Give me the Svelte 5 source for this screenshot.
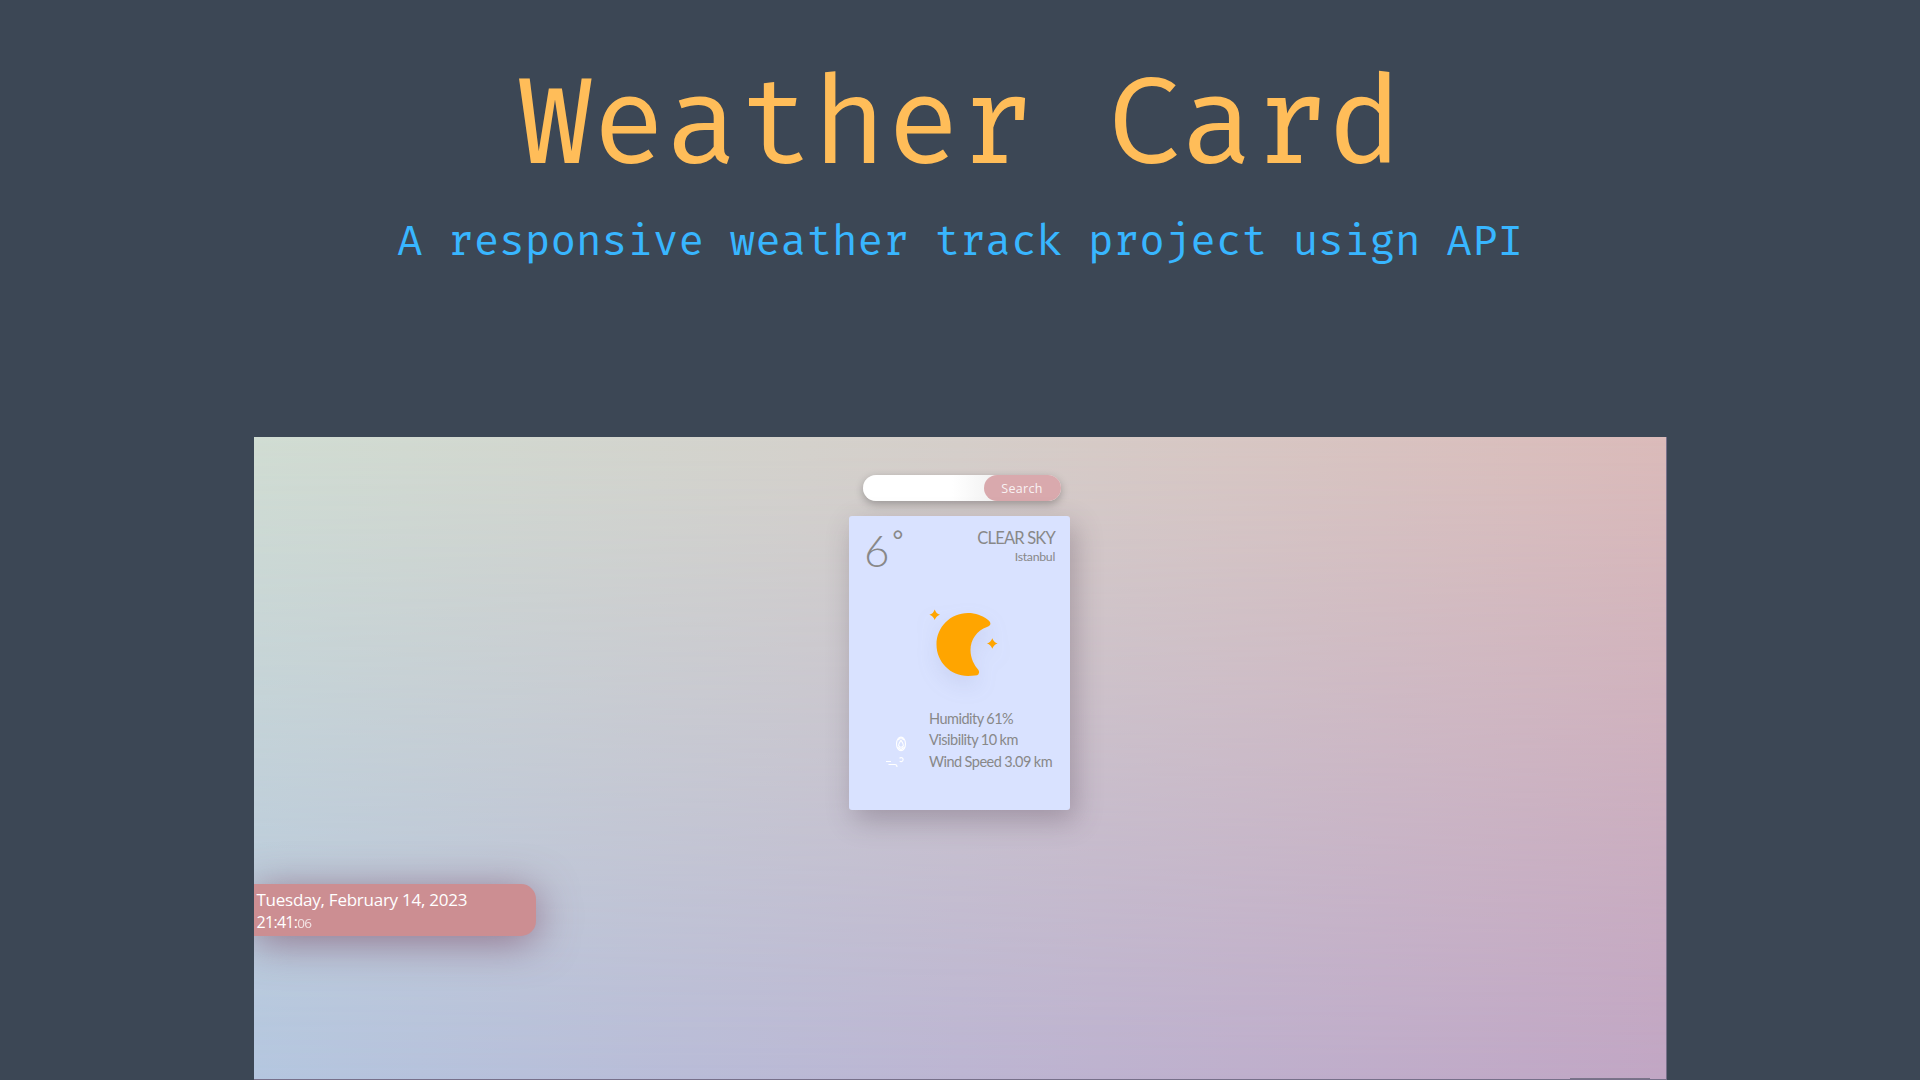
<script>
  const stats = ['Humidity 61%', 'Visibility 10 km', 'Wind Speed 3.09 km'];
</script>

<main>
  <h1>Weather Card</h1>
  <h2>A responsive weather track project usign API</h2>

  <section class="preview">
    <form class="search" onsubmit={(e) => e.preventDefault()}>
      <input aria-label="City" />
      <button>Search</button>
    </form>

    <article class="card">
      <header>
        <div class="temp"><span class="six">6</span><span class="deg">°</span></div>
        <div class="place">
          <div class="sky">CLEAR SKY</div>
          <div class="city">Istanbul</div>
        </div>
      </header>
      <svg class="moon" viewBox="0 0 80 80" width="80" height="80">
        <path d="M63.500 15.500Q67 18 66.300 20.500Q65.500 22.300 63 23C53 26 46.500 36 46.500 46C46.500 54 50 61 54.500 66Q56 68.500 54.500 70.200Q53.500 71.300 51 71.600Q48 72 44 72C26.500 72 12.500 58 12.500 40.500C12.500 23 26.500 9 44 9C51.500 9 58 11.500 63.500 15.500Z" />
        <path d="M10.700 5.400Q12 9.500 16 10.700Q12 12 10.700 16Q9.400 12 5.400 10.700Q9.400 9.500 10.700 5.400ZM68.300 34.200Q69.600 38.300 73.600 39.500Q69.600 40.800 68.300 44.800Q67 40.800 63 39.500Q67 38.300 68.300 34.200Z" />
      </svg>
      <div class="details">
        <svg class="marks" viewBox="0 0 34 42" width="34" height="42">
          <ellipse cx="21" cy="13.800" rx="4.500" ry="6.800" />
          <path d="M21 10.300C19.500 12.500 18.300 14 18.700 15.800C19.500 17.800 22.500 17.800 23.300 15.800C23.700 14 22.500 12.500 21 10.300ZM18 10l3-2.500l3 2.500M18 17.500l3 2l3-2M6 31.500h5M8.500 34.500h6.500q2 0 2 2.500M19.500 28.200c1.500-1.200 3.800-.5 3.600 1.500c-.2 2-2 2.300-3.500 1.600" />
        </svg>
        <ul>
          {#each stats as stat}<li>{stat}</li>{/each}
        </ul>
      </div>
    </article>

    <aside class="clock">
      <div class="date">Tuesday, February 14, 2023</div>
      <div class="time">21:41:<span>06</span></div>
    </aside>
  </section>
</main>

<style>
  :global(body) { background: #3c4755; overflow: hidden; }
  * { box-sizing: border-box; }
  main {
    height: 1080px;
    display: flex;
    flex-direction: column;
    align-items: center;
    background: #3c4755;
    overflow: hidden;
  }
  h1, h2 {
    margin: 0;
    font-family: 'Fira Code', 'Fira Mono', 'DejaVu Sans Mono', monospace;
    font-weight: 400;
    white-space: pre;
  }
  h1 { margin-top: 55px; color: #ffbd59; font-size: 119.600px; line-height: 144px; }
  h2 { margin-top: 19px; color: #38b6ff; font-size: 41.600px; line-height: 50px; }
  .preview {
    position: relative;
    isolation: isolate;
    width: 1413px;
    height: 643px;
    margin-top: 169px;
    padding-top: 38px;
    display: flex;
    flex-direction: column;
    align-items: center;
    overflow: hidden;
    flex: none;
    border: solid #77708a;
    border-width: 0 1px 1px 0;
    background: linear-gradient(90deg, #d1ddd3, #d6cfca 50%, #dbbbba);
  }
  .preview::before {
    content: '';
    position: absolute;
    inset: 0;
    z-index: -1;
    background: linear-gradient(90deg, #b4c6df, #bcb5d2 50%, #c1a6c4);
    mask-image: linear-gradient(transparent, #000);
  }
  .preview::after {
    content: '';
    position: absolute;
    right: 16px;
    bottom: -1px;
    width: 80px;
    height: 2px;
    background: #3c475588;
  }
  .search {
    width: 198px;
    height: 26px;
    margin: 0 0 15px 4px;
    display: flex;
    justify-content: flex-end;
    border-radius: 13px;
    background: linear-gradient(90deg, #fff 45%, #ececec 75%);
    box-shadow: 0 3px 9px #0004;
  }
  input { flex: 1; min-width: 0; border: 0; background: none; outline: 0; }
  button {
    width: 77px;
    border: 0;
    padding: 0;
    border-radius: 13px;
    color: #fffd;
    background: #d9a9ad;
    font: 12.500px/27px 'Open Sans', sans-serif;
    letter-spacing: .3px;
  }
  .card {
    width: 221px;
    height: 294px;
    border-radius: 3px;
    padding: 10px 15px 0 17px;
    background: #d9e2ff;
    box-shadow: 5px 10px 28px #50405055;
    color: #888;
    font-family: Lato, sans-serif;
  }
  header { display: flex; justify-content: space-between; height: 84px; }
  .temp { display: flex; margin-left: -2px; }
  .six { font-size: 44px; font-weight: 300; line-height: 49px; letter-spacing: -1px; }
  .deg { font-size: 26px; line-height: 28px; margin-left: 4px; }
  .place { text-align: right; }
  .sky { font-size: 16.500px; line-height: 24px; letter-spacing: -.8px; }
  .city { font-size: 12.300px; line-height: 14px; letter-spacing: -.3px; }
  .moon { display: block; margin: -6px 0 0 58px; fill: orange; filter: drop-shadow(0 9px 10px #64709e20); }
  .details { display: flex; margin-top: 24px; }
  .marks { margin: 22px 0 0 14px; fill: none; stroke: #fff; stroke-width: 1.100; }
  ul { list-style: none; margin: 0 0 0 15px; padding: 0; font-size: 14.500px; line-height: 21.400px; letter-spacing: -.5px; word-spacing: -.3px; white-space: nowrap; }
  .clock {
    align-self: flex-start;
    width: 282px;
    height: 52px;
    margin-top: 74px;
    padding: 4px 0 0 3px;
    border-radius: 0 15px 15px 0;
    background: #cc8e92;
    box-shadow: 0 6px 40px #7e4e6ab0;
    color: #fff;
    font: 17px/23px 'Open Sans', sans-serif;
  }
  .date { letter-spacing: -.25px; }
  .time { font-size: 16px; letter-spacing: -.7px; }
  .time span { font-size: 13.500px; opacity: .75; }
</style>
